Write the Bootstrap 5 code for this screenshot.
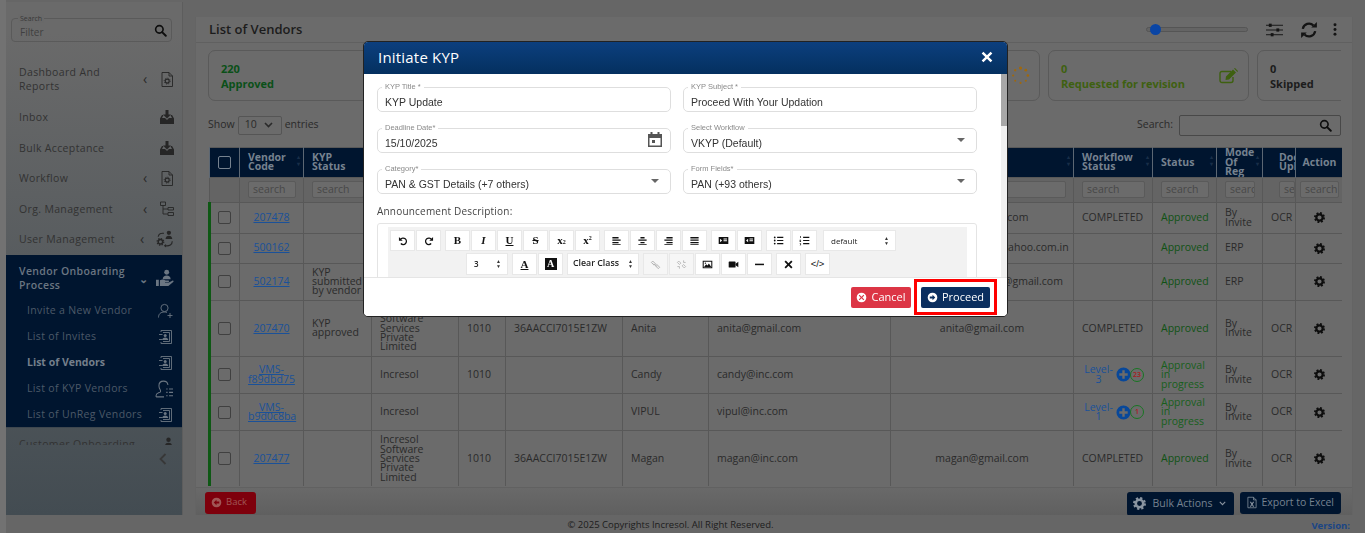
<!DOCTYPE html>
<html lang="en">
<head>
<meta charset="UTF-8">
<meta name="viewport" content="width=device-width, initial-scale=1.0">
<title>List of Vendors</title>
<link href="https://cdn.jsdelivr.net/npm/bootstrap@5.3.0/dist/css/bootstrap.min.css" rel="stylesheet">
<style>
    html, body { height: 533px; overflow: hidden; }
    body { background: #666; font-family: "Open Sans", sans-serif; font-size: 10.5px; color: #2a2a2a; }
    svg.ic { display: block; fill: currentColor; flex: none; }

    .page-wrap { display: flex; height: 515px; border-left: 6px solid #727272; background: #666; }
    .page-foot { height: 18px; display: flex; justify-content: center; align-items: center; position: relative; font-size: 9.5px; color: #1c1c1c; background: #666; border-left: 6px solid #727272; padding-top: 3px; padding-right: 30px; }
    .page-foot .ver { position: absolute; right: 15px; top: 4px; font-weight: 700; color: #1a4585; }

    /* sidebar */
    .side-bar { width: 177px; margin-top: 2px; height: 513px; background: linear-gradient(#6a6a6a 6%, #434c52 100%); border-right: 1px solid #5d5d5d; flex: none; }
    .side-search { position: relative; margin: 16px 10px 18px 5px; height: 24px; border: 1px solid #5a5a5a; border-radius: 4px; padding: 6px 0 0 8px; color: #404040; font-size: 10px; }
    .side-search label { position: absolute; left: 6px; top: -5px; background: #696969; font-size: 7px; padding: 0 2px; color: #383838; line-height: 9px; }
    .side-search svg { position: absolute; right: 4px; top: 5px; color: #0e0e0e; }
    .side-menu { height: 385px; overflow: hidden; }
    .menu-row { display: flex; align-items: center; padding: 0 7px 0 13px; min-height: 30.5px; color: #323232; font-size: 10.5px; letter-spacing: .35px; line-height: 14.3px; }
    .menu-row.two-line { min-height: 42px; padding-bottom: 4px; }
    .menu-row.clip-line { align-items: flex-start; padding-top: 9px; }
    .menu-row .lbl { flex: 1; }
    .menu-row .arrow { width: 8px; margin-right: 8px; font-size: 14px; line-height: 1; color: #2a2a2a; }
    .menu-row svg { color: #262626; }
    .menu-open { background: #00152f; border-bottom: 1px solid #3e474f; height: 173px; }
    .menu-open .menu-row { color: #6b7682; font-weight: 600; min-height: 43px; padding-top: 4px; }
    .menu-open .menu-row .arrow { color: #6b7682; font-size: 11px; }
    .menu-open svg { color: #6b7682; }
    .sub-row { display: flex; align-items: center; height: 26px; padding: 0 9px 0 21px; color: #4c5968; font-size: 10.5px; letter-spacing: .35px; }
    .sub-row .lbl { flex: 1; }
    .sub-row.current { color: #747f8b; font-weight: 700; letter-spacing: 0; }
    .side-collapse { display: flex; justify-content: flex-end; padding: 8px 15px 0 0; }
    .side-collapse svg { color: #383838; }

    /* main */
    .main-panel { width: 1158px; margin-left: 12px; margin-top: 17px; height: 500px; background: #6b6b6b; border: 1px solid #646464; border-top: 0; }
    .panel-head { height: 26px; display: flex; align-items: center; border-bottom: 1px solid #606060; padding: 0 15px 0 13px; }
    .panel-title { font-size: 13px; font-weight: 600; color: #1c1c1c; margin: 0; flex: 1; }
    .range-wrap { position: relative; width: 102px; height: 5px; border: 1px solid #555; border-radius: 3px; background: #646464; margin-right: 18px; }
    .range-wrap i { position: absolute; left: 3px; top: -4px; width: 11px; height: 11px; border-radius: 50%; background: #0a45a5; }
    .panel-tools { display: flex; align-items: center; gap: 15px; color: #141414; }
    .panel-tools .tune { margin-right: 2px; }
    .panel-body { height: 444px; padding: 7px 11px 0 12px; overflow: hidden; }
    .stat-row { display: flex; gap: 8px; width: 1133px; overflow: hidden; height: 51px; }
    .stat-box { flex: 1; display: flex; align-items: center; border: 1px solid #5a5a5a; border-radius: 7px; padding: 0 9px 0 12px; font-size: 11px; font-weight: 700; line-height: 15px; color: #2a2a2a; }
    .stat-box .lbl { flex: 1; }
    .stat-box.ok { color: #0a5018; }
    .stat-box.rev { flex: 0 0 201px; color: #3e6010; }
    .stat-box.skip { flex: 0 0 100px; margin-right: -16px; color: #1c1c1c; }
    .stat-box.pend { color: #a0680c; }
    .list-tools { display: flex; align-items: center; justify-content: space-between; width: 1133px; height: 22px; margin-top: 13px; font-size: 10.5px; color: #2a2a2a; }
    .len-pick { display: inline-flex; align-items: center; gap: 7px; width: 44px; height: 19px; border: 1px solid #555; border-radius: 2px; margin: 0 3px; padding-left: 6px; font-size: 10.5px; }
    .find-box { width: 162px; height: 21px; border: 1px solid #484848; border-radius: 2px; margin-left: 6px; display: flex; justify-content: flex-end; align-items: center; padding-right: 8px; color: #0e0e0e; }
    .table-clip { width: 1134px; margin-top: 11px; height: 339px; overflow: hidden; }

    .vendor-table { width: 1134px; table-layout: fixed; margin: 0; border-color: #585858; --bs-table-bg: transparent; --bs-table-color: #2a2a2a; }
    .vendor-table col:nth-child(1) { width: 30px; }
    .vendor-table col:nth-child(2) { width: 64px; }
    .vendor-table col:nth-child(3) { width: 68px; }
    .vendor-table col:nth-child(4) { width: 87px; }
    .vendor-table col:nth-child(5) { width: 47px; }
    .vendor-table col:nth-child(6) { width: 117px; }
    .vendor-table col:nth-child(7) { width: 86px; }
    .vendor-table col:nth-child(8) { width: 182px; }
    .vendor-table col:nth-child(9) { width: 183px; }
    .vendor-table col:nth-child(10) { width: 79px; }
    .vendor-table col:nth-child(11) { width: 64px; }
    .vendor-table col:nth-child(12) { width: 46px; }
    .vendor-table col:nth-child(13) { width: 33px; }
    .vendor-table col:nth-child(14) { width: 48px; }
    .vendor-table th, .vendor-table td { padding: 4px 8px; font-size: 10.5px; line-height: 9.4px; vertical-align: middle; overflow: hidden; }
    .vendor-table thead tr:first-child th { background: #00152f; color: #76828f; height: 28px; font-weight: 700; line-height: 9.5px; border-color: #5c6773; padding: 0 8px; position: relative; }
    .vendor-table thead tr:first-child th.sortable::after { content: "\25B4\A\25BE"; white-space: pre; position: absolute; right: 3px; top: 6px; font-size: 6px; line-height: 7px; color: #182e48; }
    .vendor-table thead tr:nth-child(2) th { background: #646464; height: 25px; padding: 3px 7px 3px 8px; }
    .filter-in { display: block; width: 100%; height: 17px; border: 1px solid #5a5a5a; border-radius: 2px; background: #6b6b6b; padding: 0 4px; font-size: 10.5px; font-weight: 400; line-height: 15px; color: #484848; overflow: hidden; white-space: nowrap; }
    .vendor-table tbody td { height: 30px; }
    .vendor-table tbody tr:first-child td { height: 31px; }
    .vendor-table tbody td:first-child { border-left: 3px solid #0e5814; padding: 0 0 0 7px; }
    .vendor-table .form-check-input { width: 13px; height: 13px; margin: 0; background-color: #6b6b6b; border-color: #404040; border-radius: 2px; display: block; }
    .vendor-table thead .form-check-input { border-color: #76828f; background-color: #00152f; }
    .vendor-table a { color: #1a5199; }
    .code-link { display: block; text-align: center; }
    .st-ok { color: #0f5214; }
    .st-wip { color: #175f1b; }
    .ctr { text-align: center; }
    .lvl-cell { display: flex; align-items: center; justify-content: flex-end; }
    .lvl-cell a { text-decoration: none; text-align: center; margin-right: 1px; line-height: 9.4px; }
    .lvl-plus { width: 15px; height: 15px; color: #08489a; flex: none; }
    .lvl-count { width: 14px; height: 14px; border: 1px solid #187522; border-radius: 50%; margin-left: -1px; color: #a81c1c; font-size: 7px; line-height: 12px; text-align: center; flex: none; font-weight: 600; }
    .act-gear { margin: 0 auto; color: #0e0e0e; }

    .panel-foot { height: 30px; display: flex; align-items: center; padding: 0 11px 0 9px; background: linear-gradient(#696969, #5f5f5f); border-top: 1px solid #616161; }
    .panel-foot .left-side { flex: 1; }
    .back-btn { display: inline-flex; align-items: center; gap: 4px; height: 22px; padding: 0 9px 0 6px; font-size: 9.5px; border-radius: 3px; border: 0; background: #7e000c; color: #a05656; }
    .dark-btn { display: inline-flex; align-items: center; height: 22px; background: #00152f; border: 0; border-radius: 3px; color: #76828f; font-size: 10.5px; padding: 0 7px 0 6px; gap: 3px; }
    .dark-btn.bulk { height: 24px; margin-right: 6px; gap: 7px; padding-right: 8px; position: relative; top: 1px; }
    .dark-btn svg { color: #8a95a1; }

    /* modal */
    .kyp-dialog { width: 645px; max-width: 645px; margin: 41px 0 0 363px; }
    .kyp-content { border: 1px solid #222; border-radius: 5px; height: 276px; overflow: hidden; font-family: "Liberation Sans", sans-serif; }
    .kyp-header { height: 32px; background: linear-gradient(#0c3f7e, #04305f); border: 0; border-radius: 0; padding: 0 14px 2px; color: #fff; }
    .kyp-header .modal-title { font-family: "Open Sans", sans-serif; font-size: 15px; font-weight: 400; letter-spacing: .2px; flex: 1; }
    .kyp-body { position: relative; height: 205px; overflow: hidden; padding: 13px 31px 0 13px; }
    .fake-bar { position: absolute; right: 0; top: 0; bottom: 0; width: 6px; background: #f1f1f1; }
    .fake-bar i { display: block; height: 52px; background: #a8a8a8; }
    .form-grid { display: grid; grid-template-columns: 294px 294px; column-gap: 12px; row-gap: 15px; }
    .form-grid .kyp-field:nth-child(n+3) { margin-top: 1px; }
    .kyp-field { position: relative; height: 25px; }
    .kyp-field > label { position: absolute; left: 5px; top: -4px; background: #fff; padding: 0 3px; font-size: 7.5px; line-height: 8px; color: #8a8a8a; }
    .kyp-input { height: 25px; border: 1px solid #dedede; border-radius: 5px; font-size: 10.5px; color: #333; padding: 4px 7px 0; box-shadow: none; line-height: 14px; font-family: "Liberation Sans", sans-serif; background-image: none; }
    .kyp-field svg { position: absolute; right: 8px; top: 4px; color: #555; }
    .kyp-field svg.caret-dn { top: 10px; right: 12px; color: #666; }
    .desc-label { font-family: "Open Sans", sans-serif; font-size: 10px; letter-spacing: .2px; color: #444; margin: 11px 0 5px; line-height: 13px; display: block; }
    .editor-box { border: 1px solid #e4e4e4; border-radius: 3px; padding: 3px 9px 0 10px; width: 600px; height: 120px; }
    .editor-bar { background: #f2f2f2; padding: 3px 2px; height: 100px; }
    .bar-line { display: flex; justify-content: flex-start; margin-bottom: 2px; height: 22px; padding-left: 76px; }
    .bar-line.first { height: 21px; padding-left: 0; }
    .tb-group { display: flex; gap: 1px; margin-right: 4px; }
    .tb-btn { display: flex; align-items: center; justify-content: center; width: 25px; height: 100%; background: #fff; border: 1px solid #e8e8e8; color: #111; font-size: 9.5px; font-weight: 700; padding: 0; }
    .tb-btn.serif { font-family: "Liberation Serif", serif; font-size: 11px; }
    .tb-btn.off { color: #aaa; background: #f6f6f6; }
    .tb-btn.inv b { background: #111; color: #fff; width: 12px; height: 12px; line-height: 12px; text-align: center; font-family: "Liberation Serif", serif; font-size: 10px; display: block; }
    .tb-btn u { text-underline-offset: 1px; }
    .tb-btn sub, .tb-btn sup { font-size: 6px; }
    .tb-select { display: flex; align-items: center; justify-content: space-between; background: #fff; border: 1px solid #e8e8e8; padding: 0 6px 0 7px; font-size: 8px; color: #222; height: 100%; font-weight: 400; font-family: "Open Sans", sans-serif; }
    .tb-select .updown { font-size: 5px; line-height: 5px; color: #333; }
    .tb-select.sel-size { width: 42px; font-weight: 600; }
    .tb-select.sel-class { width: 72px; font-weight: 600; font-size: 8.8px; padding-right: 5px; padding-left: 5px; }
    .tb-select.sel-font { width: 73px; margin-left: 2px; }
    .kyp-footer { height: 39px; padding: 0 10px 0 0; border-top: 1px solid #e5e5e5; border-radius: 0; justify-content: flex-end; background: #fff; gap: 3px; align-items: center; flex-wrap: nowrap; }
    .kyp-footer > * { margin: 0; }
    .act-btn { display: inline-flex; align-items: center; justify-content: center; gap: 4px; height: 21px; border: 0; border-radius: 2px; font-size: 11px; font-family: "Open Sans", sans-serif; padding: 0; color: #fff; }
    .act-btn.no { width: 60px; background: #dc3545; }
    .act-btn.go { width: 69px; background: #0b2f5f; }
    .mark-box { border: 3px solid #f00; padding: 4px 4px; height: 36px; display: flex; align-items: center; margin-top: 0; }
</style>
</head>
<body>

<svg width="0" height="0" class="position-absolute">
    <symbol id="i-gear" viewBox="0 0 16 16"><circle cx="8" cy="8" r="4.6" fill="none" stroke="currentColor" stroke-width="3.2"/><circle cx="8" cy="8" r="6.6" fill="none" stroke="currentColor" stroke-width="2.8" stroke-dasharray="2.7 2.48"/></symbol>
    <symbol id="i-search" viewBox="0 0 16 16"><circle cx="6.6" cy="6.6" r="4.6" fill="none" stroke="currentColor" stroke-width="2"/><path d="M10 10l4.5 4.5" stroke="currentColor" stroke-width="2.4" stroke-linecap="round"/></symbol>
    <symbol id="i-filegear" viewBox="0 0 16 16"><path d="M3 1h7l3.5 3.5V15H3z M10 1v3.5h3.5" fill="none" stroke="currentColor" stroke-width=".9"/><circle cx="8.2" cy="9.6" r="2" fill="none" stroke="currentColor" stroke-width="1.1"/><circle cx="8.2" cy="9.6" r="3" fill="none" stroke="currentColor" stroke-width=".9" stroke-dasharray="1 1.36"/></symbol>
    <symbol id="i-inbox" viewBox="0 0 16 16"><path d="M6.5 1h3v4.5H12L8 9.5 4 5.5h2.5z"/><path d="M1 9.5L3 6h1.5L3 9h3.2l1 1.6h1.6l1-1.6H13l-1.500-3H13l2 3.500V15H1z"/></symbol>
    <symbol id="i-org" viewBox="0 0 16 16"><path d="M1.500 1h5v3.500h-5z M9 6.500h5.500V9H9z M9 11.500h5.500V14.500H9z M4 4.500V13h5 M4 8h5" fill="none" stroke="currentColor" stroke-width=".9"/></symbol>
    <symbol id="i-users" viewBox="0 0 16 16"><circle cx="11" cy="2.500" r="1.900"/><path d="M8 8c0-2 1.500-3 3-3s3 1 3 3z"/><circle cx="3.500" cy="10.500" r="2" fill="none" stroke="currentColor" stroke-width="1.300"/><circle cx="3.500" cy="10.500" r="3" fill="none" stroke="currentColor" stroke-width="1" stroke-dasharray="1.200 1.150"/><path d="M1.500 6C2 3.500 4 2.500 6.500 3M14 10c0 3-2.500 4.500-6 4" fill="none" stroke="currentColor" stroke-width="1"/><path d="M8.500 12.500v3L6.500 14z"/></symbol>
    <symbol id="i-hand" viewBox="0 0 16 16"><circle cx="9.500" cy="2.800" r="2.200"/><path d="M6 9c0-2.200 1.500-3.300 3.500-3.300S13 6.800 13 9z"/><path d="M0 9.500h2.500V15H0zM3.500 10c2-1 3.500-.8 5 .2h2.500c.9 0 .9 1.300 0 1.300H8v.5h3.500l3-1.600c1-.5 1.500.6.800 1.200L11 15H3.500z"/></symbol>
    <symbol id="i-userplus" viewBox="0 0 16 16"><circle cx="7.500" cy="5" r="3.600" fill="none" stroke="currentColor" stroke-width=".9"/><path d="M1.500 14.500c0-3.500 2-5.500 6-5.500 1 0 1.800.1 2.500.4M13 10v5M10.500 12.500h5" fill="none" stroke="currentColor" stroke-width=".9"/></symbol>
    <symbol id="i-book" viewBox="0 0 16 16"><path d="M4 3V1.500h10.500v13H4V13 M6 3.500h6.500v9H6" fill="none" stroke="currentColor" stroke-width=".9"/><circle cx="8.200" cy="6.500" r="1.500"/><path d="M5.200 11c0-1.800 1.300-2.600 3-2.600s3 .8 3 2.600z"/><path d="M2 5.500h3.500M2 10.500h3.500" stroke="currentColor" stroke-width=".9"/></symbol>
    <symbol id="i-userlist" viewBox="0 0 16 16"><path d="M1 15v-1.500c0-1.500 2-2 3.500-2.700.6-.3.6-1.300 0-2.300C3.800 7.300 3.500 6 3.500 5c0-2.500 1.800-4 4-4s3.800 1.500 4 3.500 M1 15h7" fill="none" stroke="currentColor" stroke-width=".9"/><path d="M10 8h1.200M12.500 8H16M10 11h1.200M12.500 11H16M10 14h1.200M12.500 14H16" stroke="currentColor" stroke-width="1"/></symbol>
    <symbol id="i-sliders" viewBox="0 0 18 14"><path d="M0 2h18M0 7h18M0 12h18" stroke="currentColor" stroke-width="1"/><rect x="3" y=".3" width="3" height="3.400"/><rect x="11" y="5.300" width="3" height="3.400"/><rect x="5" y="10.300" width="3" height="3.400"/></symbol>
    <symbol id="i-sync" viewBox="0 0 16 16"><path d="M2.500 7a5.600 5.600 0 0 1 9.500-3M13.500 9A5.600 5.600 0 0 1 4 12" fill="none" stroke="currentColor" stroke-width="2"/><path d="M10 5.800h5V.8zM6 10.200H1v5z"/></symbol>
    <symbol id="i-dots" viewBox="0 0 4 14"><circle cx="2" cy="2" r="1.600"/><circle cx="2" cy="7" r="1.600"/><circle cx="2" cy="12" r="1.600"/></symbol>
    <symbol id="i-edit" viewBox="0 0 20 16"><path d="M14 9v3.500a2 2 0 0 1-2 2H3a2 2 0 0 1-2-2v-7a2 2 0 0 1 2-2h9" fill="none" stroke="currentColor" stroke-width="1.400"/><path d="M7 8.500l7-7 3 3-7 7-3.500.5z M15 .6l1-.6 3 3-.6 1z"/></symbol>
    <symbol id="i-spin" viewBox="0 0 18 18"><g><circle cx="9" cy="2" r="1.500"/><circle cx="14" cy="4" r="1.300"/><circle cx="16" cy="9" r="1.200"/><circle cx="14" cy="14" r="1"/><circle cx="9" cy="16" r="1"/><circle cx="4" cy="14" r=".9"/><circle cx="2" cy="9" r="1"/><circle cx="4" cy="4" r="1.100"/></g></symbol>
    <symbol id="i-cal" viewBox="0 0 16 16"><path d="M3.500 0h2v2h5V0h2v2H15v13H1V2h2.500zM2.500 6v7.500h11V6z"/><rect x="5" y="8" width="3" height="3"/></symbol>
    <symbol id="i-caret" viewBox="0 0 10 5"><path d="M0 0h10L5 5z"/></symbol>
    <symbol id="i-close" viewBox="0 0 14 14"><path d="M2.800.8L7 5 11.200.8l2 2L9 7l4.200 4.200-2 2L7 9l-4.200 4.200-2-2L5 7 .8 2.800z"/></symbol>
    <symbol id="i-undo" viewBox="0 0 16 16"><path d="M4 5.500A5.200 5.200 0 1 1 4.500 12" fill="none" stroke="currentColor" stroke-width="2"/><path d="M1.500 1.500v6h6z"/></symbol>
    <symbol id="i-redo" viewBox="0 0 16 16"><path d="M12 5.500A5.200 5.200 0 1 0 11.500 12" fill="none" stroke="currentColor" stroke-width="2"/><path d="M14.500 1.500v6h-6z"/></symbol>
    <symbol id="i-al" viewBox="0 0 16 16"><path d="M2 3h9v2H2zM2 6.500h12v2H2zM2 10h9v2H2zM2 13h12v1H2z"/></symbol>
    <symbol id="i-ac" viewBox="0 0 16 16"><path d="M5 3h6v2H5zM2 6.500h12v2H2zM5 10h6v2H5zM2 13h12v1H2z"/></symbol>
    <symbol id="i-ar" viewBox="0 0 16 16"><path d="M5 3h9v2H5zM2 6.500h12v2H2zM5 10h9v2H5zM2 13h12v1H2z"/></symbol>
    <symbol id="i-aj" viewBox="0 0 16 16"><path d="M2 3h12v2H2zM2 6.500h12v2H2zM2 10h12v2H2zM2 13h12v1H2z"/></symbol>
    <symbol id="i-ind" viewBox="0 0 16 16"><path d="M1 3h14v10H1zM8 5v1.500h5V5zM8 7.500V9h5V7.500zM3 5.500v5L6 8z" fill-rule="evenodd"/></symbol>
    <symbol id="i-out" viewBox="0 0 16 16"><path d="M1 3h14v10H1zM8 5v1.500h5V5zM8 7.500V9h5V7.500zM6 5.500v5L3 8z" fill-rule="evenodd"/></symbol>
    <symbol id="i-ul" viewBox="0 0 16 16"><circle cx="2.500" cy="3.500" r="1.300"/><circle cx="2.500" cy="8" r="1.300"/><circle cx="2.500" cy="12.500" r="1.300"/><path d="M6 2.700h9v1.600H6zM6 7.200h9v1.600H6zM6 11.700h9v1.600H6z"/></symbol>
    <symbol id="i-ol" viewBox="0 0 16 16"><path d="M1.500 1.500h1v3h-1zM1 7h2v1H2v1h1v1H1zM1 12h2v3H1v-.6h1.300V14H1.500v-.6h.8V12.700H1z"/><path d="M6 2.700h9v1.600H6zM6 7.200h9v1.600H6zM6 11.700h9v1.600H6z"/></symbol>
    <symbol id="i-link" viewBox="0 0 16 16"><path d="M2 5l2-2 4 4-2 2zM8 10l2-2 4 4-2 2zM6 7l4 4" fill="none" stroke="currentColor" stroke-width="1.300"/></symbol>
    <symbol id="i-unlink" viewBox="0 0 16 16"><path d="M2 5l2-2 3 3-2 2zM9 10l2-2 3 3-2 2zM11 2v3M14 5h-3M2 11h3M5 14v-3" fill="none" stroke="currentColor" stroke-width="1.100"/></symbol>
    <symbol id="i-pic" viewBox="0 0 16 16"><path d="M1 2.500h14v11H1zM2.500 4v8h11V4z" fill-rule="evenodd"/><path d="M3 11.500l3-4 2 2 2-3 3.500 5z"/><circle cx="5" cy="6" r="1"/></symbol>
    <symbol id="i-video" viewBox="0 0 16 16"><rect x="1" y="3.500" width="10" height="9" rx="1"/><path d="M11 7l4-3v8l-4-3z"/></symbol>
    <symbol id="i-minus" viewBox="0 0 16 16"><rect x="1.500" y="6.800" width="13" height="2.200"/></symbol>
    <symbol id="i-arrow-r" viewBox="0 0 16 16"><path d="M8 1a7 7 0 1 0 0 14A7 7 0 0 0 8 1zm0 3l4 4-4 4V9.500H4v-3h4z" fill-rule="evenodd"/></symbol>
    <symbol id="i-arrow-l" viewBox="0 0 16 16"><path d="M8 1a7 7 0 1 0 0 14A7 7 0 0 0 8 1zm0 3L4 8l4 4V9.500h4v-3H8z" fill-rule="evenodd"/></symbol>
    <symbol id="i-x-circle" viewBox="0 0 16 16"><path d="M8 1a7 7 0 1 0 0 14A7 7 0 0 0 8 1zM5.200 4L8 6.800 10.800 4 12 5.200 9.200 8 12 10.800 10.800 12 8 9.200 5.200 12 4 10.800 6.800 8 4 5.200z" fill-rule="evenodd"/></symbol>
    <symbol id="i-plus" viewBox="0 0 16 16"><path d="M8 .5a7.500 7.500 0 1 0 0 15 7.500 7.500 0 0 0 0-15zM6.700 3.500h2.600v3.200h3.200v2.600H9.300v3.200H6.700V9.300H3.500V6.700h3.200z" fill-rule="evenodd"/></symbol>
    <symbol id="i-xls" viewBox="0 0 16 16"><path d="M2.500 1h7.500l3.500 3.500V15h-11z M10 1v3.500h3.500" fill="none" stroke="currentColor" stroke-width="1"/><path d="M5 7h1.700L8 9l1.300-2H11L8.900 10.200 11 13.500H9.300L8 11.300l-1.300 2.200H5l2.100-3.300z"/></symbol>
    <symbol id="i-chev-l" viewBox="0 0 8 12"><path d="M6.500 1L1.500 6l5 5" fill="none" stroke="currentColor" stroke-width="1.800"/></symbol>
</svg>

<div class="page-wrap">
    <aside class="side-bar">
        <div class="side-search">
            <label>Search</label>Filter
            <svg class="ic" width="13" height="13"><use href="#i-search"/></svg>
        </div>
        <div class="side-menu">
            <div class="menu-row two-line"><span class="lbl">Dashboard And<br>Reports</span><span class="arrow">&lsaquo;</span><svg class="ic" width="16" height="17"><use href="#i-filegear"/></svg></div>
            <div class="menu-row"><span class="lbl">Inbox</span><svg class="ic" width="16" height="16"><use href="#i-inbox"/></svg></div>
            <div class="menu-row"><span class="lbl">Bulk Acceptance</span><svg class="ic" width="16" height="16"><use href="#i-inbox"/></svg></div>
            <div class="menu-row"><span class="lbl">Workflow</span><span class="arrow">&lsaquo;</span><svg class="ic" width="16" height="17"><use href="#i-filegear"/></svg></div>
            <div class="menu-row"><span class="lbl">Org. Management</span><span class="arrow">&lsaquo;</span><svg class="ic" width="16" height="16"><use href="#i-org"/></svg></div>
            <div class="menu-row"><span class="lbl">User Management</span><span class="arrow">&lsaquo;</span><svg class="ic" width="19" height="18"><use href="#i-users"/></svg></div>
            <div class="menu-open">
                <div class="menu-row"><span class="lbl">Vendor Onboarding<br>Process</span><span class="arrow">&#8964;</span><svg class="ic" width="20" height="18"><use href="#i-hand"/></svg></div>
                <div class="sub-row"><span class="lbl">Invite a New Vendor</span><svg class="ic" width="16" height="16"><use href="#i-userplus"/></svg></div>
                <div class="sub-row"><span class="lbl">List of Invites</span><svg class="ic" width="16" height="16"><use href="#i-book"/></svg></div>
                <div class="sub-row current"><span class="lbl">List of Vendors</span><svg class="ic" width="16" height="16"><use href="#i-book"/></svg></div>
                <div class="sub-row"><span class="lbl">List of KYP Vendors</span><svg class="ic" width="18" height="18"><use href="#i-userlist"/></svg></div>
                <div class="sub-row"><span class="lbl">List of UnReg Vendors</span><svg class="ic" width="16" height="16"><use href="#i-book"/></svg></div>
            </div>
            <div class="menu-row clip-line"><span class="lbl">Customer Onboarding</span><svg class="ic" width="16" height="16"><use href="#i-hand"/></svg></div>
        </div>
        <div class="side-collapse"><svg class="ic" width="8" height="12"><use href="#i-chev-l"/></svg></div>
    </aside>

    <main class="main-panel">
        <div class="panel-head">
            <h1 class="panel-title">List of Vendors</h1>
            <div class="range-wrap"><i></i></div>
            <div class="panel-tools">
                <svg class="ic tune" width="17" height="14"><use href="#i-sliders"/></svg>
                <svg class="ic" width="18" height="18"><use href="#i-sync"/></svg>
                <svg class="ic" width="4" height="13"><use href="#i-dots"/></svg>
            </div>
        </div>
        <div class="panel-body">
            <div class="stat-row">
                <div class="stat-box ok"><span class="lbl">220<br>Approved</span></div>
                <div class="stat-box pend"><span class="lbl">12<br>Pending</span><svg class="ic" width="19" height="19"><use href="#i-spin"/></svg></div>
                <div class="stat-box rev"><span class="lbl">0<br>Requested for revision</span><svg class="ic" width="20" height="16"><use href="#i-edit"/></svg></div>
                <div class="stat-box skip"><span class="lbl">0<br>Skipped</span></div>
            </div>
            <div class="list-tools">
                <div class="d-flex align-items-center">Show <span class="len-pick">10 <svg class="ic" width="9" height="6" viewBox="0 0 9 6"><path d="M1 1l3.500 3.500L8 1" fill="none" stroke="currentColor" stroke-width="1.600"/></svg></span> entries</div>
                <div class="d-flex align-items-center">Search:<div class="find-box"><svg class="ic" width="13" height="13"><use href="#i-search"/></svg></div></div>
            </div>
            <div class="table-clip">
                <table class="table table-bordered vendor-table">
                    <colgroup><col><col><col><col><col><col><col><col><col><col><col><col><col><col></colgroup>
                    <thead>
                        <tr>
                            <th><input class="form-check-input" type="checkbox"></th>
                            <th class="sortable">Vendor Code</th>
                            <th class="sortable">KYP Status</th>
                            <th class="sortable">Vendor Name</th>
                            <th class="sortable">Org Code</th>
                            <th class="sortable">GST No</th>
                            <th class="sortable">Contact</th>
                            <th class="sortable">Email</th>
                            <th class="sortable">Primary Email</th>
                            <th class="sortable">Workflow Status</th>
                            <th class="sortable">Status</th>
                            <th class="sortable">Mode Of Reg</th>
                            <th class="ps-3">Document Upload</th>
                            <th class="px-1 ctr">Action</th>
                        </tr>
                        <tr>
                            <th></th>
                            <th><span class="filter-in">search</span></th>
                            <th><span class="filter-in">search</span></th>
                            <th><span class="filter-in">search</span></th>
                            <th><span class="filter-in">search</span></th>
                            <th><span class="filter-in">search</span></th>
                            <th><span class="filter-in">search</span></th>
                            <th><span class="filter-in">search</span></th>
                            <th><span class="filter-in">search</span></th>
                            <th><span class="filter-in">search</span></th>
                            <th><span class="filter-in">search</span></th>
                            <th><span class="filter-in">search</span></th>
                            <th class="ps-3 pe-0"><span class="filter-in">search</span></th>
                            <th class="px-1"><span class="filter-in">search</span></th>
                        </tr>
                    </thead>
                    <tbody>
                        <tr>
                            <td><input class="form-check-input" type="checkbox"></td>
                            <td><a class="code-link" href="#">207478</a></td>
                            <td></td><td>Sunrise Traders</td><td>1010</td><td></td><td>Rakesh</td><td>rakesh@gmail.com</td><td class="ctr">rakesh@gmail.com</td>
                            <td>COMPLETED</td><td class="st-ok">Approved</td><td>By Invite</td><td>OCR</td>
                            <td><svg class="ic act-gear" width="11" height="11"><use href="#i-gear"/></svg></td>
                        </tr>
                        <tr>
                            <td><input class="form-check-input" type="checkbox"></td>
                            <td><a class="code-link" href="#">500162</a></td>
                            <td></td><td>Metro Supplies</td><td>1010</td><td></td><td>Kiran</td><td>kiran@yahoo.com.in</td><td class="ctr">accounts.metrosup@yahoo.com.in</td>
                            <td></td><td class="st-ok">Approved</td><td>ERP</td><td></td>
                            <td><svg class="ic act-gear" width="11" height="11"><use href="#i-gear"/></svg></td>
                        </tr>
                        <tr>
                            <td><input class="form-check-input" type="checkbox"></td>
                            <td><a class="code-link" href="#">502174</a></td>
                            <td>KYP submitted by vendor</td><td>Delta Works</td><td>1010</td><td></td><td>Sunil</td><td>sunil@gmail.com</td><td class="ctr">purchase.deltaworks@gmail.com</td>
                            <td></td><td class="st-ok">Approved</td><td>ERP</td><td></td>
                            <td><svg class="ic act-gear" width="11" height="11"><use href="#i-gear"/></svg></td>
                        </tr>
                        <tr>
                            <td><input class="form-check-input" type="checkbox"></td>
                            <td><a class="code-link" href="#">207470</a></td>
                            <td>KYP approved</td><td>Incresol Software Services Private Limited</td><td>1010</td><td>36AACCI7015E1ZW</td><td>Anita</td><td>anita@gmail.com</td><td class="ctr">anita@gmail.com</td>
                            <td>COMPLETED</td><td class="st-ok">Approved</td><td>By Invite</td><td>OCR</td>
                            <td><svg class="ic act-gear" width="11" height="11"><use href="#i-gear"/></svg></td>
                        </tr>
                        <tr>
                            <td><input class="form-check-input" type="checkbox"></td>
                            <td><a class="code-link" href="#">VMS-f89dbd75</a></td>
                            <td></td><td>Incresol</td><td>1010</td><td></td><td>Candy</td><td>candy@inc.com</td><td></td>
                            <td><div class="lvl-cell"><a href="#">Level-3</a><svg class="ic lvl-plus"><use href="#i-plus"/></svg><span class="lvl-count">23</span></div></td>
                            <td class="st-wip">Approval in progress</td><td>By Invite</td><td>OCR</td>
                            <td><svg class="ic act-gear" width="11" height="11"><use href="#i-gear"/></svg></td>
                        </tr>
                        <tr>
                            <td><input class="form-check-input" type="checkbox"></td>
                            <td><a class="code-link" href="#">VMS-b9d0c8ba</a></td>
                            <td></td><td>Incresol</td><td></td><td></td><td>VIPUL</td><td>vipul@inc.com</td><td></td>
                            <td><div class="lvl-cell"><a href="#">Level-1</a><svg class="ic lvl-plus"><use href="#i-plus"/></svg><span class="lvl-count">1</span></div></td>
                            <td class="st-wip">Approval in progress</td><td>By Invite</td><td>OCR</td>
                            <td><svg class="ic act-gear" width="11" height="11"><use href="#i-gear"/></svg></td>
                        </tr>
                        <tr>
                            <td><input class="form-check-input" type="checkbox"></td>
                            <td><a class="code-link" href="#">207477</a></td>
                            <td></td><td>Incresol Software Services Private Limited</td><td>1010</td><td>36AACCI7015E1ZW</td><td>Magan</td><td>magan@inc.com</td><td class="ctr">magan@gmail.com</td>
                            <td>COMPLETED</td><td class="st-ok">Approved</td><td>By Invite</td><td>OCR</td>
                            <td><svg class="ic act-gear" width="11" height="11"><use href="#i-gear"/></svg></td>
                        </tr>
                    </tbody>
                </table>
            </div>
        </div>
        <div class="panel-foot">
            <div class="left-side">
                <button type="button" class="btn back-btn"><svg class="ic" width="11" height="11"><use href="#i-arrow-l"/></svg>Back</button>
            </div>
            <button type="button" class="btn dark-btn bulk"><svg class="ic" width="13" height="13"><use href="#i-gear"/></svg>Bulk Actions <svg class="ic" width="7" height="5" viewBox="0 0 9 6"><path d="M1 1l3.500 3.500L8 1" fill="none" stroke="currentColor" stroke-width="1.400"/></svg></button>
            <button type="button" class="btn dark-btn"><svg class="ic" width="12" height="13"><use href="#i-xls"/></svg>Export to Excel</button>
        </div>
    </main>
</div>
<footer class="page-foot">&copy; 2025 Copyrights Incresol. All Right Reserved.<span class="ver">Version:</span></footer>

<div class="modal d-block" tabindex="-1" aria-labelledby="kypModalLabel">
    <div class="modal-dialog kyp-dialog">
        <div class="modal-content kyp-content">
            <div class="modal-header kyp-header">
                <h5 class="modal-title" id="kypModalLabel">Initiate KYP</h5>
                <svg class="ic" width="12" height="12"><use href="#i-close"/></svg>
            </div>
            <div class="modal-body kyp-body">
                <form id="kypForm">
                    <div class="form-grid">
                        <div class="kyp-field"><label>KYP Title *</label><input class="form-control kyp-input" value="KYP Update"></div>
                        <div class="kyp-field"><label>KYP Subject *</label><input class="form-control kyp-input" value="Proceed With Your Updation"></div>
                        <div class="kyp-field"><label>Deadline Date*</label><input class="form-control kyp-input" value="15/10/2025"><svg class="ic" width="16" height="16"><use href="#i-cal"/></svg></div>
                        <div class="kyp-field"><label>Select Workflow</label><input class="form-control kyp-input" value="VKYP (Default)"><svg class="ic caret-dn" width="8" height="4"><use href="#i-caret"/></svg></div>
                        <div class="kyp-field"><label>Category*</label><input class="form-control kyp-input" value="PAN &amp; GST Details (+7 others)"><svg class="ic caret-dn" width="8" height="4"><use href="#i-caret"/></svg></div>
                        <div class="kyp-field"><label>Form Fields*</label><input class="form-control kyp-input" value="PAN (+93 others)"><svg class="ic caret-dn" width="8" height="4"><use href="#i-caret"/></svg></div>
                    </div>
                    <label class="desc-label">Announcement Description:</label>
                    <div class="editor-box">
                        <div class="editor-bar">
                            <div class="bar-line first">
                                <div class="tb-group"><span class="tb-btn"><svg class="ic" width="10" height="10"><use href="#i-undo"/></svg></span><span class="tb-btn"><svg class="ic" width="10" height="10"><use href="#i-redo"/></svg></span></div>
                                <div class="tb-group"><span class="tb-btn serif">B</span><span class="tb-btn serif"><i>I</i></span><span class="tb-btn serif"><u>U</u></span><span class="tb-btn serif"><s>S</s></span><span class="tb-btn serif">x<sub>2</sub></span><span class="tb-btn serif">x<sup>2</sup></span></div>
                                <div class="tb-group"><span class="tb-btn"><svg class="ic" width="11" height="11"><use href="#i-al"/></svg></span><span class="tb-btn"><svg class="ic" width="11" height="11"><use href="#i-ac"/></svg></span><span class="tb-btn"><svg class="ic" width="11" height="11"><use href="#i-ar"/></svg></span><span class="tb-btn"><svg class="ic" width="11" height="11"><use href="#i-aj"/></svg></span></div>
                                <div class="tb-group"><span class="tb-btn"><svg class="ic" width="11" height="11"><use href="#i-ind"/></svg></span><span class="tb-btn"><svg class="ic" width="11" height="11"><use href="#i-out"/></svg></span></div>
                                <div class="tb-group"><span class="tb-btn"><svg class="ic" width="11" height="11"><use href="#i-ul"/></svg></span><span class="tb-btn"><svg class="ic" width="11" height="11"><use href="#i-ol"/></svg></span></div>
                                <div class="tb-select sel-font">default <span class="updown">&#9650;<br>&#9660;</span></div>
                            </div>
                            <div class="bar-line">
                                <div class="tb-group"><div class="tb-select sel-size">3 <span class="updown">&#9650;<br>&#9660;</span></div></div>
                                <div class="tb-group"><span class="tb-btn serif"><u>A</u></span><span class="tb-btn inv"><b>A</b></span></div>
                                <div class="tb-group"><div class="tb-select sel-class">Clear Class <span class="updown">&#9650;<br>&#9660;</span></div></div>
                                <div class="tb-group"><span class="tb-btn off"><svg class="ic" width="11" height="11"><use href="#i-link"/></svg></span><span class="tb-btn off"><svg class="ic" width="11" height="11"><use href="#i-unlink"/></svg></span><span class="tb-btn"><svg class="ic" width="11" height="11"><use href="#i-pic"/></svg></span><span class="tb-btn"><svg class="ic" width="11" height="11"><use href="#i-video"/></svg></span><span class="tb-btn"><svg class="ic" width="11" height="11"><use href="#i-minus"/></svg></span></div>
                                <div class="tb-group"><span class="tb-btn"><svg class="ic" width="9" height="9"><use href="#i-close"/></svg></span></div>
                                <div class="tb-group me-0"><span class="tb-btn fw-normal">&lt;/&gt;</span></div>
                            </div>
                        </div>
                    </div>
                </form>
                <div class="fake-bar"><i></i></div>
            </div>
            <div class="modal-footer kyp-footer">
                <button type="button" class="btn act-btn no"><svg class="ic" width="11" height="11"><use href="#i-x-circle"/></svg>Cancel</button>
                <div class="mark-box"><button type="submit" class="btn act-btn go"><svg class="ic" width="11" height="11"><use href="#i-arrow-r"/></svg>Proceed</button></div>
            </div>
        </div>
    </div>
</div>

<script src="https://cdn.jsdelivr.net/npm/bootstrap@5.3.0/dist/js/bootstrap.bundle.min.js"></script>
</body>
</html>
